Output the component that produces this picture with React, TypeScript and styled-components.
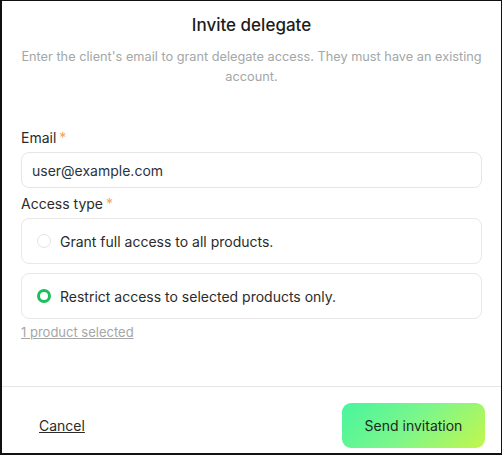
import * as React from 'react';
import styled, { createGlobalStyle } from 'styled-components';

const GlobalStyle = createGlobalStyle`
	html, body {
		margin: 0;
		padding: 0;
		background: #ffffff;
	}
	* {
		box-sizing: border-box;
	}
`;

const Dialog = styled.div`
	width: 502px;
	height: 455px;
	background: #ffffff;
	border: 1px solid #111111;
	border-left-width: 2px;
	border-bottom-width: 2px;
	display: flex;
	flex-direction: column;
	font-family: Inter, 'Noto Sans', sans-serif;
	color: #2a2a2a;
`;

const Header = styled.div`
	display: flex;
	flex-direction: column;
	align-items: center;
	padding: 13px 14px 0;
`;

const Title = styled.h2`
	margin: 0;
	font-size: 17px;
	font-weight: 500;
	line-height: 22px;
	color: #1c1c1c;
`;

const Subtitle = styled.p`
	margin: 11px 0 0;
	font-size: 12.75px;
	line-height: 20px;
	color: #a3a7a7;
	text-align: center;
`;

const Body = styled.div`
	display: flex;
	flex-direction: column;
	padding: 42px 19px 0;
	flex: 1;
`;

const Label = styled.label`
	font-size: 14px;
	line-height: 18px;
	color: #2b2b2b;
	margin-bottom: 5px;
`;

const Required = styled.span`
	color: #f5a25d;
	margin-left: 3px;
`;

const Input = styled.div`
	height: 36px;
	border: 1px solid #e6e6e6;
	border-radius: 8px;
	display: flex;
	align-items: center;
	padding: 0 10px;
	font-size: 14px;
	color: #2c3340;
	margin-bottom: 7px;
`;

const Options = styled.div`
	display: flex;
	flex-direction: column;
	gap: 9px;
`;

const OptionCard = styled.div`
	height: 46px;
	border: 1px solid #e8e8e8;
	border-radius: 8px;
	display: flex;
	align-items: center;
	gap: 9px;
	padding: 0 15px;
	font-size: 14px;
	color: #2b2b2b;
`;

const Radio = styled.span<{ $checked?: boolean }>`
	width: 14px;
	height: 14px;
	border-radius: 50%;
	border: ${(p) => (p.$checked ? '3px solid #1cbf5d' : '1px solid #e4e4e4')};
	flex-shrink: 0;
`;

const SelectedLink = styled.a`
	margin-top: 4px;
	font-size: 13px;
	line-height: 18px;
	color: #a6a6a6;
	text-decoration: underline;
	align-self: flex-start;
`;

const Footer = styled.div`
	border-top: 1px solid #e6e6e6;
	height: 67px;
	display: flex;
	align-items: center;
	justify-content: space-between;
	padding: 10px 16px 0 37px;
`;

const CancelLink = styled.a`
	font-size: 14px;
	color: #2b2b2b;
	text-decoration: underline;
`;

const SendButton = styled.button`
	width: 143px;
	height: 45px;
	border: none;
	border-radius: 9px;
	background: linear-gradient(135deg, #47f59e 0%, #7ef68a 50%, #c3f64c 100%);
	font-family: inherit;
	font-size: 14px;
	color: #1b2a22;
	cursor: pointer;
`;

export default function App() {
	return (
		<>
			<GlobalStyle />
			<Dialog>
				<Header>
					<Title>Invite delegate</Title>
					<Subtitle>
						Enter the client's email to grant delegate access. They must have an
						existing account.
					</Subtitle>
				</Header>
				<Body>
					<Label>
						Email<Required>*</Required>
					</Label>
					<Input>user@example.com</Input>
					<Label>
						Access type<Required>*</Required>
					</Label>
					<Options>
						<OptionCard>
							<Radio />
							Grant full access to all products.
						</OptionCard>
						<OptionCard>
							<Radio $checked />
							Restrict access to selected products only.
						</OptionCard>
					</Options>
					<SelectedLink>1 product selected</SelectedLink>
				</Body>
				<Footer>
					<CancelLink>Cancel</CancelLink>
					<SendButton>Send invitation</SendButton>
				</Footer>
			</Dialog>
		</>
	);
}
